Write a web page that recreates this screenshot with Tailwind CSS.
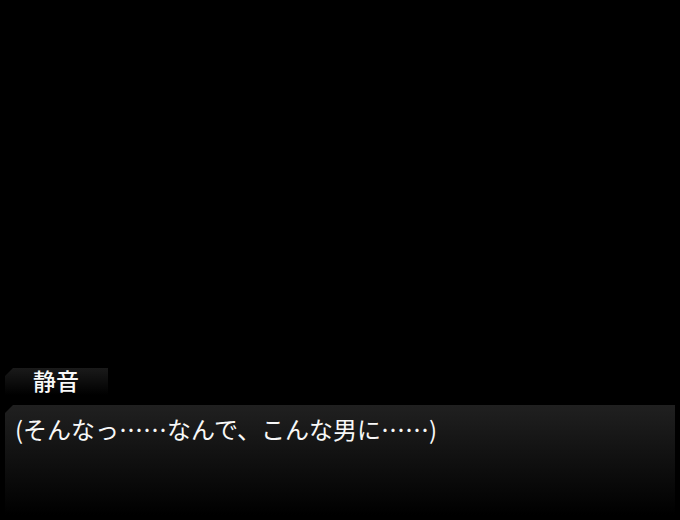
<!DOCTYPE html>
<html lang="ja">
<head>
  <meta charset="UTF-8">
  <meta name="viewport" content="width=device-width, initial-scale=1.0">
  <title>静音</title>
  <script src="https://cdn.jsdelivr.net/npm/@tailwindcss/browser@4"></script>
</head>
<body class="bg-black text-[#f8f8f8] font-['Noto_Sans_CJK_JP',sans-serif]">
  <main class="min-h-screen flex flex-col justify-end items-start gap-2.5 px-[5px] pb-[5px]">
    <h1 class="min-w-[103px] h-[27px] px-7 text-[23px] leading-[25px] font-medium bg-linear-to-b/srgb from-[#1a1a1a] to-black [clip-path:polygon(8px_0,100%_0,100%_100%,0_100%,0_8px)]">静音</h1>
    <section class="w-full min-h-[110px] px-2.5 py-2 bg-linear-to-b/srgb from-[#202020] to-black [clip-path:polygon(8px_0,100%_0,100%_100%,0_100%,0_8px)]">
      <p class="text-2xl/8">(そんなっ……なんで、こんな男に……)</p>
    </section>
  </main>
</body>
</html>
